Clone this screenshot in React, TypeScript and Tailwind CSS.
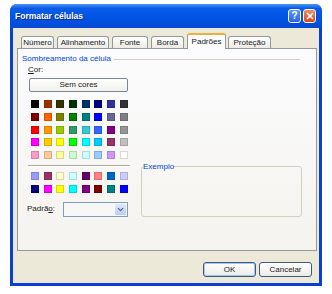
import { ChevronDown } from "lucide-react";

const mainColors = [
  ["bg-[#000000]", "bg-[#993300]", "bg-[#333300]", "bg-[#003300]", "bg-[#003366]", "bg-[#000080]", "bg-[#333399]", "bg-[#333333]"],
  ["bg-[#800000]", "bg-[#ff6600]", "bg-[#808000]", "bg-[#008000]", "bg-[#008080]", "bg-[#0000ff]", "bg-[#666699]", "bg-[#808080]"],
  ["bg-[#ff0000]", "bg-[#ff9900]", "bg-[#99cc00]", "bg-[#339966]", "bg-[#33cccc]", "bg-[#3366ff]", "bg-[#800080]", "bg-[#969696]"],
  ["bg-[#ff00ff]", "bg-[#ffcc00]", "bg-[#ffff00]", "bg-[#00ff00]", "bg-[#00ffff]", "bg-[#00ccff]", "bg-[#993366]", "bg-[#c0c0c0]"],
  ["bg-[#ff99cc]", "bg-[#ffcc99]", "bg-[#ffff99]", "bg-[#ccffcc]", "bg-[#ccffff]", "bg-[#99ccff]", "bg-[#cc99ff]", "bg-[#ffffff]"],
];

const chartColors = [
  ["bg-[#9999ff]", "bg-[#993366]", "bg-[#ffffcc]", "bg-[#ccffff]", "bg-[#660066]", "bg-[#ff8080]", "bg-[#0066cc]", "bg-[#ccccff]"],
  ["bg-[#000080]", "bg-[#ff00ff]", "bg-[#ffff00]", "bg-[#00ffff]", "bg-[#800080]", "bg-[#800000]", "bg-[#008080]", "bg-[#0000ff]"],
];

const tabs = [
  { label: "Número", w: "w-[33px]" },
  { label: "Alinhamento", w: "w-[52px]" },
  { label: "Fonte", w: "w-[36px]" },
  { label: "Borda", w: "w-[33px]" },
  { label: "Padrões", w: "w-[39px]", active: true },
  { label: "Proteção", w: "w-[43px]" },
];

function Swatches({ rows }: { rows: string[][] }) {
  return (
    <div className="grid grid-cols-[repeat(8,8px)] gap-x-[4.7px] gap-y-[4.75px]">
      {rows.flat().map((c, i) => (
        <div key={i} className={`w-[8px] h-[8px] border border-black/15 ${c}`} />
      ))}
    </div>
  );
}

export default function App() {
  return (
    <div className="w-[332px] h-[294px] bg-white pt-[4px] pl-[10px] font-['Liberation_Sans',Arial,sans-serif] text-[8px] text-[#1a1a1a]">
      <div className="w-[312px] h-[282px] flex flex-col rounded-t-[7px] bg-[#0b3fd4] overflow-hidden">
        {/* Title bar */}
        <div className="h-[24px] flex items-center pl-[5px] pr-[6px] bg-[linear-gradient(180deg,#4a95fa_0%,#0a5ce8_18%,#0054e3_60%,#0849d4_100%)]">
          <span className="text-white font-bold text-[8.5px] [text-shadow:1px_1px_0_#0a2a8a]">Formatar células</span>
          <div className="ml-auto flex gap-[2px]">
            <div className="w-[13px] h-[14px] rounded-[3px] border border-white bg-[linear-gradient(180deg,#5d95f8,#2a62e6)] flex items-center justify-center text-white font-bold text-[10px] leading-none">
              ?
            </div>
            <div className="w-[13px] h-[14px] rounded-[3px] border border-white bg-[linear-gradient(180deg,#f08c6a,#d8461f)] flex items-center justify-center">
              <svg width="8" height="8" viewBox="0 0 8 8">
                <path d="M1 1L7 7M7 1L1 7" stroke="white" strokeWidth="1.6" />
              </svg>
            </div>
          </div>
        </div>

        {/* Client area */}
        <div className="flex-1 mx-[3px] mb-[3px] bg-[#ece9d8] flex flex-col pt-[5px]">
          {/* Tabs */}
          <div className="h-[15px] flex items-end pl-[8px] gap-[3px] relative z-10">
            {tabs.map((t) =>
              t.active ? (
                <div
                  key={t.label}
                  className={`${t.w} h-[16px] -mb-px -mr-px border border-b-0 border-[#919b9c] border-t-2 border-t-[#f2ae3c] rounded-t-[3px] bg-[#fcfcfe] flex items-center justify-center`}
                >
                  {t.label}
                </div>
              ) : (
                <div
                  key={t.label}
                  className={`${t.w} h-[12px] border border-b-0 border-[#919b9c] rounded-t-[3px] bg-[linear-gradient(180deg,#ffffff,#ecebe5)] flex items-center justify-center`}
                >
                  {t.label}
                </div>
              )
            )}
          </div>

          {/* Panel */}
          <div className="ml-[4px] w-[300px] h-[203px] border border-[#919b9c] bg-[linear-gradient(180deg,#fcfcfe,#f4f3ee)] flex flex-col">
            <div className="mt-[5px] h-[10px] flex items-center pl-[4px]">
              <span className="text-[#0046d5]">Sombreamento da célula</span>
              <div className="flex-1 h-px bg-[#d0d0bf] ml-[3px] mr-[16px]" />
            </div>
            <div className="mt-[1px] h-[10px] leading-[10px] pl-[10px]">
              <span className="underline">C</span>or:
            </div>
            <div className="mt-[3px] ml-[11px] w-[99px] h-[14px] rounded-[2px] border border-[#7a8797] bg-[linear-gradient(180deg,#ffffff,#f1f0ea)] flex items-center justify-center">
              Sem cores
            </div>

            <div className="mt-[8px] flex items-end">
              <div className="ml-[10px] w-[102px] flex flex-col">
                <div className="ml-[3px]">
                  <Swatches rows={mainColors} />
                </div>
                <div className="mt-[6px] h-px bg-[#aca899]" />
                <div className="h-px bg-white" />
                <div className="mt-[5px] ml-[3px]">
                  <Swatches rows={chartColors} />
                </div>
                <div className="mt-[9px] h-[15px] flex items-center -ml-px">
                  <span className="w-[36px]">
                    Padrã<span className="underline">o</span>:
                  </span>
                  <div className="w-[65px] h-[15px] border border-[#7f9db9] bg-[#f7f7f5] flex justify-end p-px">
                    <div className="w-[11px] h-full rounded-[1px] bg-[linear-gradient(180deg,#dfe8fd,#b8cdf9)] flex items-center justify-center">
                      <ChevronDown size={9} strokeWidth={3} className="text-[#4d6185]" />
                    </div>
                  </div>
                </div>
              </div>

              <fieldset className="ml-[11px] w-[161px] h-[55px] border border-[#d0d0bf] rounded-[3px]">
                <legend className="ml-px leading-[10px] text-[#0046d5]">Exemplo</legend>
              </fieldset>
            </div>
          </div>

          {/* Buttons */}
          <div className="mt-[11px] flex justify-end gap-[3px] pr-[7px]">
            <div className="w-[53px] h-[15px] rounded-[3px] border border-[#3c5a85] bg-[linear-gradient(180deg,#ffffff,#ecebe6)] shadow-[inset_0_0_0_1px_#a8c4f0] flex items-center justify-center">
              OK
            </div>
            <div className="w-[53px] h-[15px] rounded-[3px] border border-[#3c5a85] bg-[linear-gradient(180deg,#ffffff,#ecebe6)] flex items-center justify-center">
              Cancelar
            </div>
          </div>
        </div>
      </div>
    </div>
  );
}
